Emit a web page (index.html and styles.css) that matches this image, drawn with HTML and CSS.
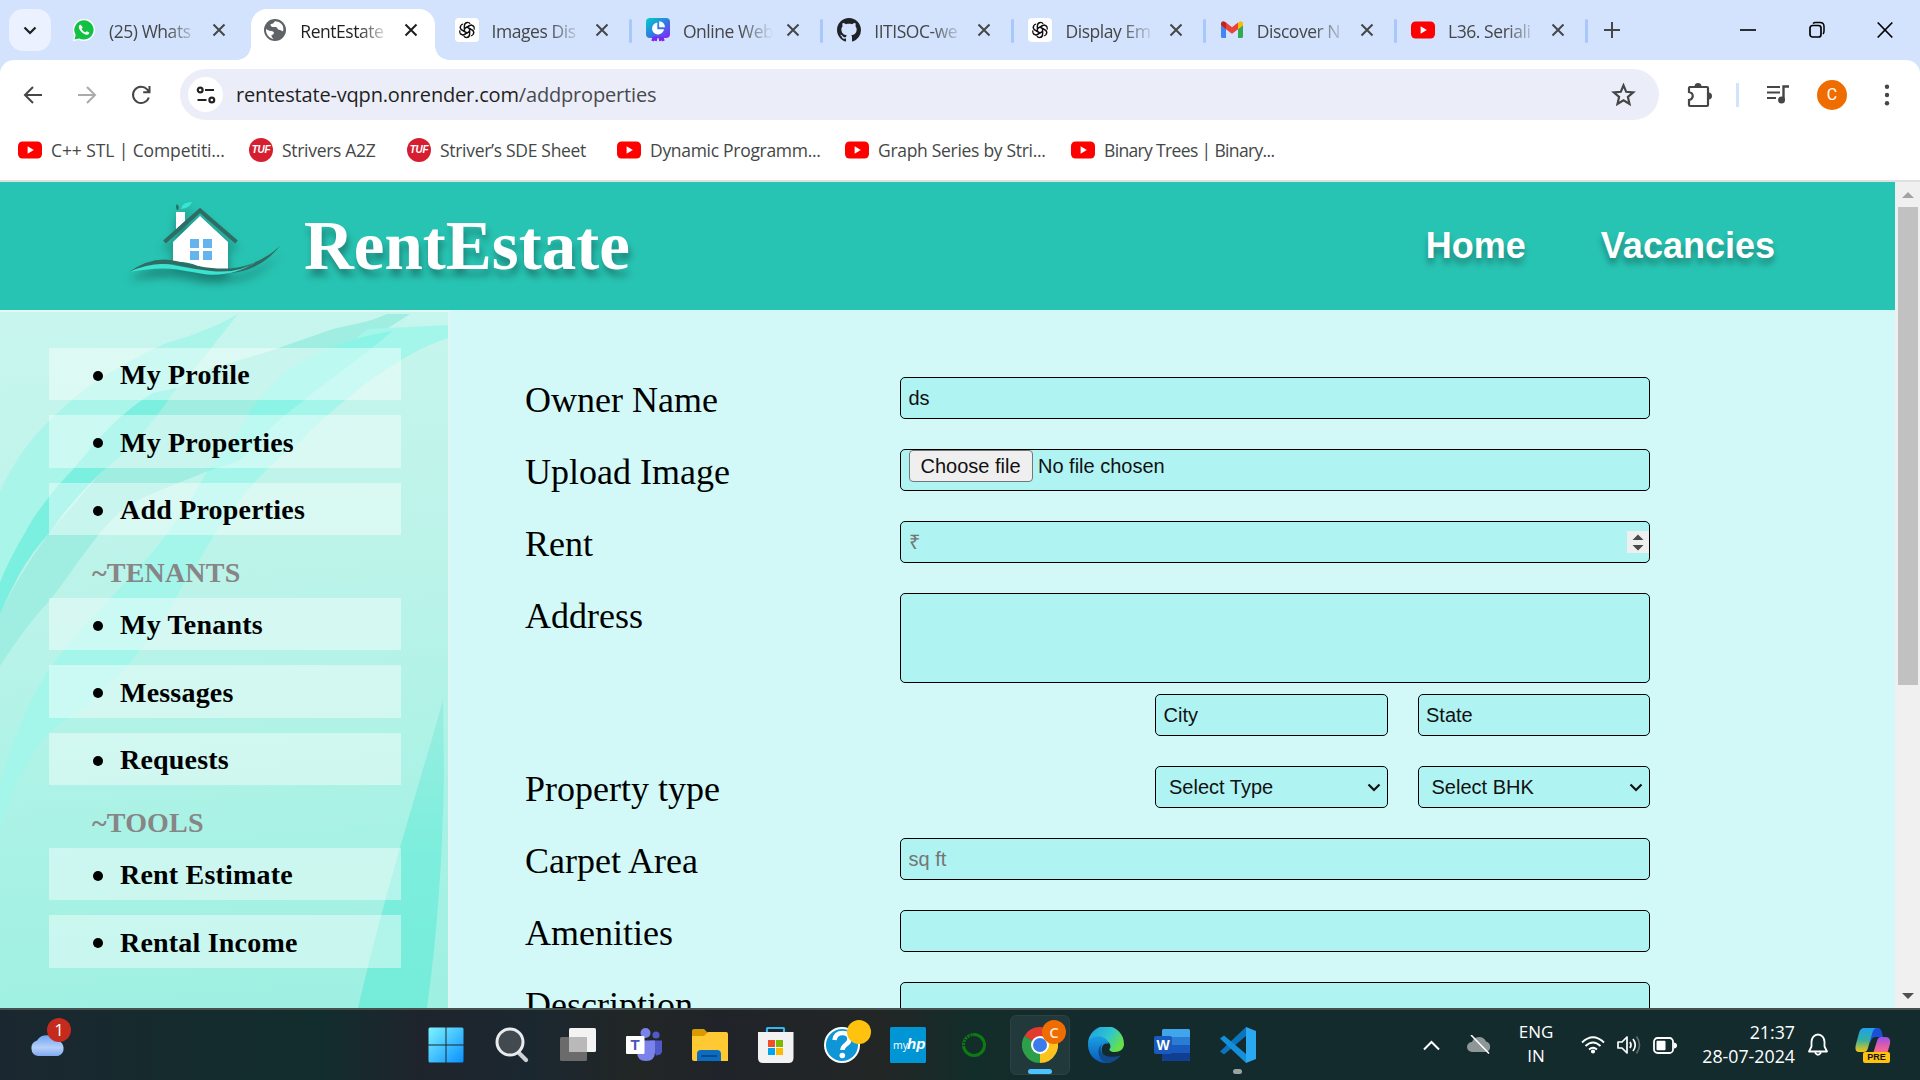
FILE: index.html
```html
<!DOCTYPE html>
<html lang="en">
<head>
<meta charset="utf-8">
<title>RentEstate</title>
<link rel="stylesheet" href="styles.css">
</head>
<body>
<svg class="defs" width="0" height="0">
  <symbol id="yt" viewBox="0 0 24 24"><rect x="0" y="3.5" width="24" height="17" rx="4.5" fill="#f00"/><path d="M9.6 8.3v7.4l6.2-3.7z" fill="#fff"/></symbol>
  <symbol id="close" viewBox="0 0 14 14"><path d="M1.5 1.5l11 11M12.5 1.5l-11 11" stroke="currentColor" stroke-width="2" fill="none"/></symbol>
  <symbol id="gpt" viewBox="0 0 24 24"><rect width="24" height="24" rx="4" fill="#fff"/><g fill="none" stroke="#111" stroke-width="1.400" stroke-linejoin="round" transform="translate(1.200 1.200) scale(.9)"><path id="petal" d="M9.2 13.6V7.2c0-2.2 1.5-3.6 3.4-3.6 1.3 0 2.3.6 2.9 1.5M9.2 10.3l5.3-3.1c1.9-1 4-.4 4.9 1.2"/><use href="#petal" transform="rotate(60 12 12)"/><use href="#petal" transform="rotate(120 12 12)"/><use href="#petal" transform="rotate(180 12 12)"/><use href="#petal" transform="rotate(240 12 12)"/><use href="#petal" transform="rotate(300 12 12)"/></g></symbol>
  <symbol id="chev" viewBox="0 0 14 9"><path d="M1.5 1.5L7 7l5.500-5.500" fill="none" stroke="currentColor" stroke-width="2.200"/></symbol>
</svg>

<header class="tabstrip">
  <div class="tab-search"><svg width="14" height="9"><use href="#chev"/></svg></div>
  <div class="tabs">
    <div class="tab"><svg class="fav" viewBox="0 0 24 24"><path d="M12 1a11 11 0 0 0-9.600 16.400L.8 23.300l6-1.600A11 11 0 1 0 12 1z" fill="#fff"/><path d="M12 2.200a9.700 9.700 0 0 0-8.300 14.700l-1.200 4.700 4.700-1.200A9.700 9.700 0 1 0 12 2.200z" fill="#12c143"/><path d="M8.800 6.800c-.5-.4-1.200-.1-1.700.8-.8 1.500 0 4 2.200 6.200s4.800 3.400 6.500 2.700c1.100-.4 1.600-1.200 1.400-2l-2.500-1.300-1.400 1.300c-1.600-.6-3.100-2-3.700-3.700l1.200-1.300z" fill="#fff"/></svg><span class="title">(25) Whats</span><svg class="x"><use href="#close"/></svg></div>
    <div class="tab active"><svg class="fav" viewBox="0 0 24 24"><circle cx="12" cy="12" r="11" fill="#5f6368"/><path d="M12.500 3.200c-2 .3-1.500 2.500-3.500 2.600C6.500 6 7.500 8.600 9.500 9c2 .3 4.500-.5 5 1.500s3 1 4.500 2.500c1.800 1.600 1.500-3 .8-5.200A9 9 0 0 0 12.500 3.200zM3 11c2 2 5 1.500 7 2.500s.5 3-1 3.500.2 2.500 1.500 3.900C6 20 2.500 16 3 11z" fill="#fff"/></svg><span class="title">RentEstate</span><svg class="x"><use href="#close"/></svg></div>
    <div class="tab sep"><svg class="fav"><use href="#gpt"/></svg><span class="title">Images Dis</span><svg class="x"><use href="#close"/></svg></div>
    <div class="tab sep"><svg class="fav" viewBox="0 0 24 24"><defs><linearGradient id="pv" x1="0" y1="0" x2="1" y2="1"><stop offset="0" stop-color="#00d0c8"/><stop offset=".5" stop-color="#2a80e0"/><stop offset="1" stop-color="#8a20ff"/></linearGradient></defs><rect width="24" height="20" rx="4" fill="url(#pv)"/><path d="M8 19l-1.500 4M16 19l1.500 4M10.500 18.500L9.500 23M13.500 18.500l1 4.500" stroke="#7a28f0" stroke-width="2.600"/><path d="M11.300 4.500a6 6 0 1 0 6.700 6.700h-6.700z" fill="#fff"/><path d="M13.200 3.200a6 6 0 0 1 5.800 6h-5.800z" fill="#fff"/></svg><span class="title">Online Web</span><svg class="x"><use href="#close"/></svg></div>
    <div class="tab sep"><svg class="fav" viewBox="0 0 16 16"><path fill="#1f2328" d="M8 0C3.580 0 0 3.580 0 8c0 3.540 2.290 6.530 5.470 7.590.4.070.55-.17.55-.38 0-.19-.01-.82-.01-1.490-2.010.37-2.530-.49-2.690-.94-.09-.23-.48-.94-.82-1.130-.28-.15-.68-.52-.01-.53.63-.01 1.080.58 1.230.82.72 1.210 1.870.87 2.330.66.07-.52.28-.87.51-1.070-1.780-.2-3.640-.89-3.640-3.950 0-.87.31-1.590.82-2.150-.08-.2-.36-1.020.08-2.120 0 0 .67-.21 2.200.82.64-.18 1.320-.27 2-.27s1.360.09 2 .27c1.530-1.040 2.200-.82 2.200-.82.44 1.100.16 1.920.08 2.120.51.56.82 1.270.82 2.150 0 3.070-1.870 3.750-3.650 3.950.29.25.54.73.54 1.480 0 1.070-.01 1.930-.01 2.200 0 .21.15.46.55.38A8.010 8.010 0 0 0 16 8c0-4.420-3.580-8-8-8z"/></svg><span class="title">IITISOC-we</span><svg class="x"><use href="#close"/></svg></div>
    <div class="tab sep"><svg class="fav"><use href="#gpt"/></svg><span class="title">Display Em</span><svg class="x"><use href="#close"/></svg></div>
    <div class="tab sep"><svg class="fav" viewBox="0 0 24 24"><path d="M1 7v11.500A1.500 1.500 0 0 0 2.500 20H6v-9z" fill="#4285f4"/><path d="M23 7v11.500a1.500 1.500 0 0 1-1.500 1.500H18v-9z" fill="#34a853"/><path d="M18 5v6.200l5-3.900V5.500c0-2-2.300-3-3.800-1.800z" fill="#fbbc04"/><path d="M1 5.500C1 3.500 3.300 2.500 4.800 3.700L6 4.600v6.600L1 7.300z" fill="#c5221f"/><path d="M6 4.600l6 4.600 6-4.600v6.600l-6 4.600-6-4.600z" fill="#ea4335"/></svg><span class="title">Discover N</span><svg class="x"><use href="#close"/></svg></div>
    <div class="tab sep"><svg class="fav"><use href="#yt"/></svg><span class="title">L36. Seriali</span><svg class="x"><use href="#close"/></svg></div>
  </div>
  <svg class="newtab" width="16" height="16" viewBox="0 0 16 16"><path d="M8 0v16M0 8h16" stroke="#444746" stroke-width="2"/></svg>
  <div class="winctl">
    <svg width="16" height="18" viewBox="0 0 16 18"><path d="M0 9h16" stroke="#000" stroke-width="1.600"/></svg>
    <svg width="16" height="18" viewBox="0 0 16 18"><rect x="1" y="4.500" width="11" height="11.500" rx="2.500" fill="none" stroke="#000" stroke-width="1.700"/><path d="M4 2.500Q5 1.500 6.500 1.500H11q4 0 4 4V10q0 2-1 3" fill="none" stroke="#000" stroke-width="1.500"/></svg>
    <svg width="16" height="18" viewBox="0 0 16 18"><path d="M.7 1.500l14.600 15M15.300 1.500l-14.600 15" stroke="#000" stroke-width="1.700"/></svg>
  </div>
</header>

<div class="toolbar">
  <svg class="nav" viewBox="0 0 20 20"><path d="M19 10H2.500M10 2L2 10l8 8" fill="none" stroke="#444746" stroke-width="2"/></svg>
  <svg class="nav" viewBox="0 0 20 20"><path d="M1 10h16.500M10 2l8 8-8 8" fill="none" stroke="#aaabab" stroke-width="2"/></svg>
  <svg class="nav" viewBox="0 0 20 20"><path d="M17.800 12.500a8.100 8.100 0 1 1-1.700-8.100l2 2.400M18.500 1v6.300h-6.300" fill="none" stroke="#444746" stroke-width="2"/></svg>
  <div class="omnibox">
    <div class="site"><svg width="20" height="18" viewBox="0 0 20 18" fill="none" stroke="#222" stroke-width="2.200"><circle cx="4.200" cy="4" r="2.400"/><path d="M9 4h9M1.500 14h9"/><circle cx="15.800" cy="14" r="2.400"/></svg></div>
    <span class="url">rentestate-vqpn.onrender.com<i>/addproperties</i></span>
    <svg width="25" height="24" viewBox="0 0 24 24"><path d="M12 2.300l2.700 6.500 7 .6-5.300 4.600 1.600 6.900-6-3.700-6 3.700 1.600-6.900L2.300 9.400l7-.6z" fill="none" stroke="#444746" stroke-width="2.200"/></svg>
  </div>
  <div class="actions">
    <svg width="26" height="26" viewBox="0 0 26 26"><path d="M3 5h18q1 0 1 1v17q0 1-1 1H4q-1 0-1-1v-5c5-1 5-7 0-8V6q0-1 1-1z" fill="none" stroke="#444746" stroke-width="2.200"/><path d="M8.500 4.500a3.500 3.500 0 0 1 7 0zM22.500 10.500a3.500 3.500 0 0 1 0 7z" fill="#444746"/></svg>
    <i class="bar"></i>
    <svg class="queue" width="24" height="22" viewBox="0 0 24 22"><path d="M1 3h13M1 8.500h13M1 14h9" stroke="#444746" stroke-width="2.200"/><path d="M17.500 16V2.500H23" fill="none" stroke="#444746" stroke-width="2.400"/><circle cx="15.500" cy="16" r="3.500" fill="#444746"/></svg>
    <span class="avatar">C</span>
    <svg class="more" width="6" height="22" viewBox="0 0 6 22" fill="#444746"><circle cx="3" cy="2.800" r="2.200"/><circle cx="3" cy="11" r="2.200"/><circle cx="3" cy="19.200" r="2.200"/></svg>
  </div>
</div>

<nav class="bookmarks">
  <a class="bm b1"><svg><use href="#yt"/></svg><span>C++ STL | Competiti...</span></a>
  <a class="bm b2"><b>TUF</b><span>Strivers A2Z</span></a>
  <a class="bm b3"><b>TUF</b><span>Striver’s SDE Sheet</span></a>
  <a class="bm b4"><svg><use href="#yt"/></svg><span>Dynamic Programm...</span></a>
  <a class="bm b5"><svg><use href="#yt"/></svg><span>Graph Series by Stri...</span></a>
  <a class="bm b6"><svg><use href="#yt"/></svg><span>Binary Trees | Binary...</span></a>
</nav>

<div class="viewport">
  <div class="page">
    <div class="site-header">
      <svg class="logo" width="152" height="80" viewBox="0 0 152 80">
        <path d="M47 13h9v9l-9 9z" fill="#fff"/><path d="M48 11q-2-3 0-6 3 3 1 6z" fill="#2c6b60"/><path d="M52 10q1-7 11-7-2 6-11 7z" fill="#3be3d1"/>
        <path d="M44 43L71 17l28 26v28q-12 2-30-4-13-5-25-4z" fill="#fff"/>
        <path d="M35.500 43L71 11.500 107.500 43" fill="none" stroke="#2f6c64" stroke-width="4"/>
        <path d="M61 40h9v9h-9zM74 40h9v9h-9zM61 52h9v9h-9zM74 52h9v9h-9z" fill="#64b5ee"/>
        <path d="M0 73Q24 56 47 62t36 7q40 4 68-22-24 30-64 27-20-4-38-8T0 73z" fill="#2f6c64"/>
        <path d="M0 73q24-11 44-7t38 6q28 3 46-10-20 15-50 13.500-12-2-30-5T0 73z" fill="#3be3d1"/>
      </svg>
      <h1>RentEstate</h1>
      <nav><a>Home</a><a>Vacancies</a></nav>
    </div>
    <div class="columns">
      <aside>
        <svg class="leaves" viewBox="0 0 448 698" preserveAspectRatio="none">
          <defs><linearGradient id="f" x1="0" y1="0" x2="0" y2="1"><stop offset="0" stop-color="#9aeee0"/><stop offset=".5" stop-color="#7deedd"/><stop offset="1" stop-color="#75ecda"/></linearGradient></defs>
          <path fill="#a9f5ea" d="M238 2C214 16 190 24 167 31C140 42 120 55 100 67C80 79 65 95 50 108C25 133 12 155 0 180V271C10 250 20 230 33 207C45 190 58 173 73 158C85 143 98 127 113 112C125 101 138 90 153 81L177 76L187 67C200 50 220 25 238 2z"/>
          <path fill="#a0eee1" d="M410 2H387C370 10 350 13 333 17L267 40L207 58C196 64 187 70 177 76C165 92 155 107 143 121C130 137 115 150 100 162L50 221C28 250 12 278 0 303V355C15 332 30 310 50 289C65 270 78 250 90 235C100 220 112 207 123 198C137 188 152 182 167 176L207 160L250 130L290 80z"/>
          <path fill="#7bf0e0" d="M177 76L153 81C138 90 125 101 113 112C98 127 85 143 73 158C58 173 45 190 33 207C20 230 8 250 0 271V303C6 289 13 275 20 262C28 248 38 234 50 221C65 198 82 180 100 162C115 150 130 137 143 121C155 107 166 92 177 76z"/>
          <path fill="#a4f6eb" d="M448 13L367 17L207 160C200 172 194 183 187 194C175 211 163 228 150 244C133 263 117 280 100 298C82 317 65 336 50 357C38 375 27 395 20 416C10 438 4 458 0 479V522C8 492 18 465 33 443C43 428 53 416 67 409C84 398 100 384 113 370C124 360 133 349 140 339C152 325 163 309 173 293C181 276 191 262 200 248C214 222 230 200 247 180C263 160 281 144 300 130C316 113 333 98 350 85C366 70 383 60 400 49C417 38 433 31 448 26z"/>
          <path fill="#8bf4e7" d="M410 2L393 19C373 22 352 27 333 35C314 42 298 51 283 62C270 74 260 87 250 99C238 122 222 142 207 160L240 149C254 132 269 118 283 105L317 78L367 40C384 27 399 14 410 2z"/>
          <path fill="url(#f)" d="M443 388C430 440 390 560 358 698H427Q442 590 444 463z"/>
        </svg>
        <ul>
          <li><span>My Profile</span></li>
          <li><span>My Properties</span></li>
          <li><span>Add Properties</span></li>
        </ul>
        <h2>~TENANTS</h2>
        <ul>
          <li><span>My Tenants</span></li>
          <li><span>Messages</span></li>
          <li><span>Requests</span></li>
        </ul>
        <h2>~TOOLS</h2>
        <ul>
          <li><span>Rent Estimate</span></li>
          <li><span>Rental Income</span></li>
        </ul>
      </aside>
      <main class="form">
        <div class="row"><label>Owner Name</label><div class="field">ds</div></div>
        <div class="row"><label>Upload Image</label><div class="field file"><span class="btn">Choose file</span><span>No file chosen</span></div></div>
        <div class="row"><label>Rent</label><div class="field hint number"><span>₹</span><svg width="22" height="22" viewBox="0 0 22 22"><rect width="22" height="22" fill="#efefef"/><path d="M5.500 9L11 3.500 16.500 9zM5.500 14L11 19.500 16.500 14z" fill="#4a4a4a"/></svg></div></div>
        <div class="row address"><label>Address</label><div class="stack"><div class="field tall"></div><div class="pair"><div class="field">City</div><div class="field">State</div></div></div></div>
        <div class="row"><label>Property type</label><div class="pair"><div class="field select">Select Type<svg width="14" height="9"><use href="#chev"/></svg></div><div class="field select">Select BHK<svg width="14" height="9"><use href="#chev"/></svg></div></div></div>
        <div class="row"><label>Carpet Area</label><div class="field hint">sq ft</div></div>
        <div class="row"><label>Amenities</label><div class="field"></div></div>
        <div class="row"><label>Description</label><div class="field tall"></div></div>
      </main>
    </div>
  </div>
  <div class="scrollbar"><svg width="12" height="6"><path d="M0 6l6-6 6 6z" fill="#a3a3a3"/></svg><i></i><svg width="12" height="6"><path d="M0 0h12l-6 6z" fill="#505050"/></svg></div>
</div>

<footer class="taskbar">
  <div class="weather"><svg width="36" height="24" viewBox="0 0 36 24"><defs><linearGradient id="cl" x1="0" y1="0" x2="0" y2="1"><stop offset="0" stop-color="#6fa3f0"/><stop offset=".6" stop-color="#b5d0fa"/><stop offset="1" stop-color="#7fa8ee"/></linearGradient></defs><path d="M8 24a8 8 0 0 1-1-15.500A11 9 0 0 1 27 8.500 8 8 0 0 1 28 24z" fill="url(#cl)"/></svg><span class="badge red">1</span></div>
  <div class="apps">
    <div class="app"><svg viewBox="0 0 36 36"><defs><linearGradient id="w" x1="0" y1="0" x2="1" y2="1"><stop offset="0" stop-color="#7df4ff"/><stop offset="1" stop-color="#0a90ff"/></linearGradient></defs><path d="M.5 2q0-1.500 1.500-1.500h15.500v17H.5zM18.500.5H34q1.500 0 1.500 1.500v15.500h-17zM.5 18.500h17v17H2q-1.500 0-1.500-1.500zM18.500 18.500h17V34q0 1.500-1.500 1.500H18.500z" fill="url(#w)"/></svg></div>
    <div class="app"><svg viewBox="0 0 36 36"><path d="M23 24l9 9" stroke="#cfd3d6" stroke-width="4.200" stroke-linecap="round"/><circle cx="16" cy="15" r="13" fill="#42494f" stroke="#e9ecee" stroke-width="3"/></svg></div>
    <div class="app"><svg viewBox="0 0 36 36"><rect x="9" y="1" width="27" height="24" rx="1.500" fill="#f3f3f3"/><rect x="0" y="10" width="27" height="24" rx="1.500" fill="#6b6b6b"/><path d="M9 10h18v15H9z" fill="#b9b9b9"/></svg></div>
    <div class="app"><svg viewBox="0 0 36 36"><circle cx="30" cy="8" r="3.600" fill="#5059c9"/><path d="M24 13.500h12V24q0 4-6 4.500z" fill="#5059c9"/><circle cx="19.500" cy="6" r="5" fill="#7b83eb"/><path d="M11 13.500h18V25q0 9-9 9t-9-9z" fill="#7b83eb"/><rect x="0" y="9" width="18.500" height="18" rx="1" fill="#fff"/><text x="9.200" y="23" class="ic-t">T</text></svg></div>
    <div class="app"><svg viewBox="0 0 36 36"><path d="M0 4q0-2 2-2h10l4 4v8H0z" fill="#d99a00"/><path d="M0 9h12l4-4h18q2 0 2 2v27H2q-2 0-2-2z" fill="#ffc933"/><path d="M5 34V27q0-4 4-4h16q4 0 4 4v7z" fill="#0b6cc0"/><path d="M9 29h16" stroke="#0a3f7a" stroke-width="1.500"/></svg></div>
    <div class="app"><svg viewBox="0 0 36 36"><path d="M9 8V2q0-1 1-1h15q1 0 1 1v6" fill="none" stroke="#35b5f0" stroke-width="2.200"/><path d="M0 5h35.500v26q0 5-5 5H5q-5 0-5-5z" fill="#f2f2f2"/><path d="M10 13h7v7h-7z" fill="#f04e23"/><path d="M18 13h7v7h-7z" fill="#7db900"/><path d="M10 21h7v7h-7z" fill="#00a3ee"/><path d="M18 21h7v7h-7z" fill="#ffb800"/></svg></div>
    <div class="app"><svg viewBox="0 0 36 36"><circle cx="18" cy="18" r="17" fill="#0f96d6" stroke="#fff" stroke-width="2"/><path d="M10.500 13q1-7 8-7t7 6q0 3-3.500 5.500T18.500 23" fill="none" stroke="#fff" stroke-width="4.500"/><circle cx="18.300" cy="28.500" r="2.800" fill="#fff"/></svg><span class="badge yellow"></span></div>
    <div class="app"><svg viewBox="0 0 36 36"><rect width="36" height="36" rx="1.500" fill="#0096d6"/><text x="3" y="22" class="ic-my">my</text><text x="17" y="22" class="ic-hp">hp</text></svg></div>
    <div class="app"><svg viewBox="0 0 36 36"><circle cx="18" cy="18" r="10.500" fill="none" stroke="#0d7a12" stroke-width="3"/><path d="M8 19a10.500 10.500 0 0 1 9-11" fill="none" stroke="#13302a" stroke-width="3.200" stroke-dasharray="1 2"/></svg></div>
    <div class="app on"><svg viewBox="0 0 36 36"><path d="M18 18L2.400 9A18 18 0 0 1 33.600 9z" fill="#e33b2e"/><path d="M18 18L33.600 9A18 18 0 0 1 18 36z" fill="#fcc31e"/><path d="M18 18v18A18 18 0 0 1 2.400 9z" fill="#2d9f48"/><path d="M18 9.500h15.800L25.500 22 18 36l7-13z" fill="#fcc31e"/><circle cx="18" cy="18" r="9" fill="#fff"/><circle cx="18" cy="18" r="7" fill="#3a7cec"/></svg><span class="badge orange">C</span><i class="mark"></i></div>
    <div class="app"><svg viewBox="0 0 36 36"><defs><linearGradient id="e1" x1="0" y1="0" x2="1" y2=".5"><stop offset="0" stop-color="#1b9de2"/><stop offset=".6" stop-color="#2fc5d0"/><stop offset="1" stop-color="#66e04a"/></linearGradient><linearGradient id="e2" x1="0" y1="0" x2="0" y2="1"><stop offset="0" stop-color="#1aa0e4"/><stop offset="1" stop-color="#0c59b8"/></linearGradient></defs><path d="M0 17A18 18 0 0 1 36 17c0 5-4 8-9 8-3 0-6-1-5.500-3 2-2 1-7-4-8.500C10 11 2 12 0 17z" fill="url(#e1)"/><path d="M0 18c0-6 6-9.500 12-8.500 5 .6 8.500 4 8.500 7.500-8-3-11 12 3 18.200A18 18 0 0 1 0 18z" fill="url(#e2)"/><path d="M14 17c-5 8 3 16 18.500 11.500C29 34 22 36.500 17 35.500 10 32 8 22 14 17z" fill="#114a8b"/></svg></div>
    <div class="app"><svg viewBox="0 0 36 36"><rect x="8" y="2" width="28" height="32" rx="2" fill="#2b7cd3"/><path d="M8 10V4q0-2 2-2h24q2 0 2 2v6z" fill="#41a5ee"/><path d="M8 18h28v8H8z" fill="#185abd"/><path d="M8 26h28v6q0 2-2 2H10q-2 0-2-2z" fill="#103f91"/><rect x="0" y="9" width="18" height="18" rx="2" fill="#185abd"/><text x="9" y="23" class="ic-w">W</text></svg></div>
    <div class="app"><svg viewBox="0 0 36 36"><path d="M26 9L4 27.500 0 24.500 26 0z" fill="#0a74bd"/><path d="M26 27L4 8.500 0 11.500 26 36z" fill="#148fdc"/><path d="M26 0l10 4v28l-10 4z" fill="#2aa8f2"/></svg><i class="mark dot"></i></div>
  </div>
  <div class="tray">
    <svg class="t-up" width="17" height="11" viewBox="0 0 17 11"><path d="M1 9.500l7.500-7.500L16 9.500" fill="none" stroke="#fff" stroke-width="2"/></svg>
    <svg class="t-cloud" width="24" height="20" viewBox="0 0 24 20"><path d="M5 17a5 5 0 0 1 0-10A7.500 7.500 0 0 1 19 6.500 5.500 5.500 0 0 1 19.500 17z" fill="#8d9797"/><path d="M4 0l18 18.500" stroke="#fff" stroke-width="1.600"/></svg>
    <div class="lang">ENG<br>IN</div>
    <svg class="t-wifi" width="24" height="18" viewBox="0 0 24 18" fill="none" stroke="#fff" stroke-width="1.800"><path d="M1 6.500q11-10.500 22 0M4.500 10q7.500-7 15 0M8 13.500q4-3.600 8 0"/><circle cx="12" cy="15.500" r="1.200" fill="#fff"/></svg>
    <svg class="t-vol" width="24" height="20" viewBox="0 0 24 20" fill="none" stroke="#fff" stroke-width="1.700"><path d="M1 7h4l5-5v16l-5-5H1z" stroke-linejoin="round"/><path d="M13 7q2 3 0 6M16 4q4.500 6 0 12"/><path d="M19.500 1.500q6 8.500 0 17" stroke="#5c6d6e"/></svg>
    <svg class="t-bat" width="24" height="17" viewBox="0 0 24 17"><rect x="1" y="1" width="19" height="15" rx="3.500" fill="none" stroke="#fff" stroke-width="1.800"/><rect x="3.500" y="3.700" width="9" height="9.600" rx="1" fill="#fff"/><path d="M21 5.500q3 .5 3 3t-3 3z" fill="#fff"/></svg>
    <div class="clock">21:37<br>28-07-2024</div>
    <svg class="t-bell" width="20" height="24" viewBox="0 0 20 24" fill="none" stroke="#fff" stroke-width="1.800"><path d="M1 18.500l2.500-5V9a6.500 7.500 0 0 1 13 0v4.500l2.500 5zM7 19.500q3 4.500 6 0" stroke-linejoin="round"/></svg>
    <div class="copilot"><svg width="36" height="36" viewBox="0 0 36 36"><defs><linearGradient id="c1" x1="0" y1="0" x2="0" y2="1"><stop offset="0" stop-color="#1e9ff0"/><stop offset=".5" stop-color="#35b0a0"/><stop offset="1" stop-color="#f5c514"/></linearGradient><linearGradient id="c2" x1="0" y1="0" x2="0" y2="1"><stop offset="0" stop-color="#9a50e8"/><stop offset=".5" stop-color="#f0609a"/><stop offset="1" stop-color="#ff8a4a"/></linearGradient></defs><path d="M15 1h8q3 0 4 5l1 4h-8q-3 0-5 6z" fill="#1a50d8"/><path d="M9 1h12q-3 1-4 6l-4 14q-1 4-4 4H4q-5 0-3-8L4 6q1.500-5 5-5z" fill="url(#c1)"/><path d="M26 10h5q5 0 4 7l-3 10q-2 6-6 6H14q3-1 4-6l4-13q1-4 4-4z" fill="url(#c2)"/></svg><b>PRE</b></div>
  </div>
</footer>
</body>
</html>
```
FILE: styles.css
```css
* { box-sizing: border-box; }
body { margin: 0; width: 1920px; height: 1080px; overflow: hidden; display: flex; flex-direction: column; background: #d3e2fd; font-family: "Open Sans", "Noto Sans", sans-serif; color: #444746; }
svg { display: block; flex: none; }
.defs { position: absolute; }

/* tab strip */
.tabstrip { height: 60px; flex: none; display: flex; align-items: center; padding-left: 9px; }
.tab-search { width: 42px; height: 42px; border-radius: 14px; background: #ebf1fe; display: flex; align-items: center; justify-content: center; color: #1f1f1f; }
.tabs { display: flex; align-self: flex-end; margin-left: 9px; }
.tab { position: relative; width: 183.300px; margin-right: 8px; height: 51px; padding: 0 17px 9px 12px; display: flex; align-items: center; font-size: 17.500px; letter-spacing: -.45px; }
.tab.active { background: #fff; border-radius: 16px 16px 0 0; color: #1f1f1f; }
.tab.active::before, .tab.active::after { content: ""; position: absolute; bottom: 0; width: 14px; height: 14px; }
.tab.active::before { left: -14px; background: radial-gradient(circle at 0 0, transparent 13.500px, #fff 14px); }
.tab.active::after { right: -14px; background: radial-gradient(circle at 100% 0, transparent 13.500px, #fff 14px); }
.tab.sep::after { content: ""; position: absolute; right: -6px; top: 10px; width: 3px; height: 24px; border-radius: 2px; background: #a8c7fa; }
.fav { width: 24px; height: 24px; }
.title { width: 92px; margin: 2px 0 0 13px; white-space: nowrap; -webkit-mask-image: linear-gradient(90deg, #000 62%, transparent 98%); mask-image: linear-gradient(90deg, #000 62%, transparent 98%); }
.x { width: 14px; height: 14px; margin-left: auto; }
.newtab { margin-left: 14px; }
.winctl { margin-left: auto; padding-right: 27px; display: flex; gap: 52.500px; }

/* toolbar */
.toolbar { height: 68px; flex: none; background: #fff; border-radius: 14px 14px 0 0; display: flex; align-items: center; padding: 1px 30px 0 23px; }
.nav { width: 20px; height: 20px; margin-right: 34px; }
.omnibox { width: 1479px; height: 51px; margin-left: -5px; border-radius: 26px; background: #ebeef8; display: flex; align-items: center; padding: 0 23px 0 8px; }
.site { width: 35px; height: 35px; border-radius: 50%; background: #fff; display: flex; align-items: center; justify-content: center; }
.url { flex: 1; margin-left: 13px; font-size: 20px; letter-spacing: -.17px; color: #1f1f1f; }
.url i { font-style: normal; color: #474a50; }
.actions { flex: 1; display: flex; align-items: center; padding-left: 27px; }
.bar { width: 3px; height: 24px; margin-left: 24px; background: #d3e3fd; }
.queue, .avatar { margin-left: 27px; }
.more { margin-left: auto; }
.avatar { width: 30px; height: 30px; border-radius: 50%; background: #ef6c00; color: #fff; font: 16px/30px Roboto, sans-serif; text-align: center; }

/* bookmarks */
.bookmarks { height: 54px; flex: none; background: #fff; border-bottom: 2px solid #dfe1e1; display: flex; align-items: center; padding: 0 0 9px 18px; font-size: 17.500px; white-space: nowrap; }
.bm { display: flex; align-items: center; gap: 9px; }
.bm svg, .bm b { width: 24px; height: 24px; flex: none; }
.bm b { border-radius: 50%; background: #d51f31; color: #fff; font: italic bold 10px/24px "Liberation Sans", sans-serif; text-align: center; }
.b1, .b2, .b3, .b4, .b5 { letter-spacing: -.3px; }
.b1 { width: 231px; letter-spacing: -.1px; }
.b2 { width: 158px; }
.b3 { width: 210px; }
.b4 { width: 228px; }
.b5 { width: 226px; }
.b6 { letter-spacing: -.65px; }

/* web page */
.viewport { height: 826px; flex: none; display: flex; overflow: hidden; }
.page { width: 1895px; background: #d2f9f8; color: #000; }
.site-header { height: 128px; background: #28c4b3; display: flex; align-items: center; padding: 0 120px 0 129px; color: #fff; }
.logo { margin-top: -14px; filter: drop-shadow(0 8px 5px rgba(0,0,0,.35)); overflow: visible; }
h1 { margin: 0 0 0 23px; font: bold 69px/80px "Liberation Serif", serif; text-shadow: 2px 7px 7px rgba(0,0,0,.32); }
.site-header nav { margin-left: auto; display: flex; gap: 75px; font: bold 36px/40px "Liberation Sans", sans-serif; text-shadow: 0 6px 6px rgba(0,0,0,.32); }
.columns { display: flex; }
aside { position: relative; width: 450px; height: 698px; padding: 37.500px 47px 0 49px; border-top: 2px solid #e2f8f4; border-right: 2px solid #dff7f4; background: linear-gradient(175deg, #c8f6ee 0%, #bbf3e9 40%, #a8f2e5 75%, #9ef0e2 100%); }
.leaves { position: absolute; left: 0; top: 0; width: 448px; height: 696px; }
aside ul, aside h2 { position: relative; margin: 0; padding: 0; }
aside ul { list-style: none; display: grid; gap: 15px; margin-top: -2px; }
aside h2 + ul { margin-top: -1.500px; }
li { height: 52.500px; background: rgba(255,255,255,.42); display: flex; align-items: center; padding-left: 44px; font: bold 28px/32px "Liberation Serif", serif; letter-spacing: .2px; }
li::before { content: ""; width: 10px; height: 10px; border-radius: 50%; background: #000; margin: 4px 17px 0 0; }
li span { margin-top: 3px; }
aside h2 { height: 64px; padding: 22px 0 0 43px; font: bold 28px/32px "Liberation Serif", serif; letter-spacing: .2px; color: #878585; }
.form { width: 1200px; padding: 67px 0 0 75px; display: flex; flex-direction: column; gap: 30px; }
.row { display: flex; width: 1125px; }
label { width: 375px; flex: none; height: 42px; font: 36px/42px "Liberation Serif", serif; padding-top: 2px; }
.field { flex: 1; height: 42px; border: 1px solid #000; border-radius: 5px; background: #aff3f2; padding: 0 7.500px; font: 20px/40px "Liberation Sans", sans-serif; color: #111; }
.hint { color: #757575; }
.file { display: flex; gap: 5.500px; line-height: 32px; }
.btn { width: 124px; height: 32px; border: 1px solid #767676; border-radius: 4px; background: #efefef; text-align: center; line-height: 31px; }
.number { display: flex; justify-content: space-between; align-items: center; padding-right: 0; }
.stack { flex: 1; display: flex; flex-direction: column; gap: 11px; }
.tall { flex: none; height: 90px; }
.row > .tall { flex: 1; }
.pair { margin-left: auto; width: 495px; display: flex; gap: 30px; }
.select { display: flex; justify-content: space-between; align-items: center; padding: 0 6px 0 13px; }
.scrollbar { width: 25px; background: #f0f0f0; display: flex; flex-direction: column; align-items: center; padding: 10px 0 9px; }
.scrollbar i { width: 20px; height: 478px; background: #c1c1c1; margin: 9px 0 auto; }

/* taskbar */
.taskbar { height: 72px; flex: none; border-top: 2px solid #46504f; background: linear-gradient(90deg, #1b2730 0, #152b2d 180px, #122d2d 320px, #1f242c 420px, #1b2730 530px, #222625 640px, #20242a 720px, #222625 880px, #132d2a 970px, #142b2d 1100px, #142b2d 100%); display: flex; align-items: center; color: #fff; }
.weather { position: relative; width: 416px; padding: 0 0 2px 30px; }
.badge { position: absolute; width: 24px; height: 24px; border-radius: 50%; font: 15px/24px "Open Sans", sans-serif; text-align: center; color: #fff; }
.red { left: 47px; top: -14px; background: #c42b1c; font-size: 17px; }
.yellow, .orange { left: 35px; top: 5px; }
.yellow { background: #ffc20e; }
.orange { background: #ef6c00; font-weight: 600; color: #ffe6d0; }
.apps { display: flex; gap: 6px; }
.app { position: relative; width: 60px; height: 60px; border-radius: 6px; display: flex; align-items: center; justify-content: center; }
.app svg { width: 36px; height: 36px; }
.app.on { background: #22393b; border: 1px solid #2b4243; }
.on .badge { left: 31px; top: 4px; }
.mark { position: absolute; left: 17px; bottom: 0; width: 24px; height: 5px; border-radius: 3px; background: #4cc2ff; }
.dot { left: 25px; bottom: 1px; width: 9px; background: #9aa3a3; }
.ic-t { font: bold 15px "Liberation Sans", sans-serif; fill: #4b53bc; text-anchor: middle; }
.ic-w { font: bold 14px "Liberation Sans", sans-serif; fill: #fff; text-anchor: middle; }
.ic-my { font: 10.500px "Open Sans", sans-serif; fill: #fff; }
.ic-hp { font: italic bold 15px "Liberation Sans", sans-serif; fill: #fff; }
.tray { margin-left: auto; display: flex; align-items: center; height: 70px; padding-right: 29px; font-size: 17px; line-height: 24px; }
.t-cloud { margin-left: 27px; }
.lang { width: 46px; margin-left: 22px; text-align: center; margin-top: -2px; }
.t-wifi { margin-left: 22px; }
.t-vol, .t-bat { margin-left: 12px; }
.clock { width: 118px; text-align: right; margin-top: -3px; font-size: 17.800px; }
.t-bell { margin-left: 13px; }
.copilot { position: relative; margin-left: 27px; }
.copilot b { position: absolute; left: 8px; bottom: 0; width: 27px; height: 11px; border-radius: 2px; background: #ffc20e; color: #111; font: bold 9px/11px "Liberation Sans", sans-serif; text-align: center; }
```
